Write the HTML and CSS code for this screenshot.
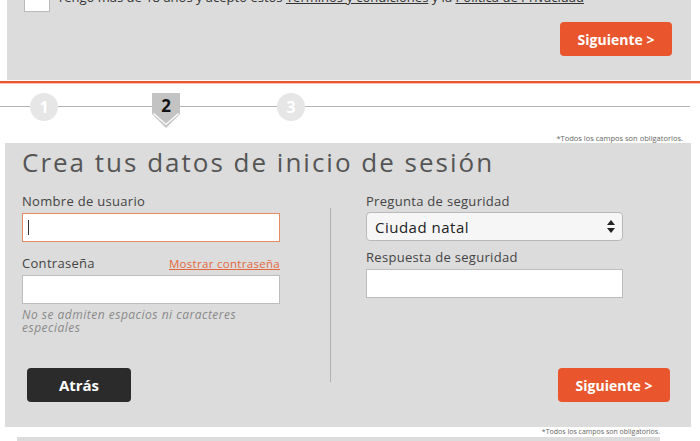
FILE: index.html
```html
<!DOCTYPE html>
<html lang="es">
<head>
    <meta charset="UTF-8">
    <title>Registro - Paso 2</title>
    <link rel="stylesheet" href="styles.css">
</head>
<body>
    <div class="terms">
        <div class="terms-row">
            <span class="checkbox"></span>
            <p class="terms-text">Tengo más de 18 años y acepto estos <a href="#">Términos y condiciones</a> y la <a href="#">Política de Privacidad</a></p>
        </div>
        <div class="actions-end">
            <button class="btn btn-primary">Siguiente &gt;</button>
        </div>
    </div>

    <div class="accent-line"></div>

    <div class="steps">
        <span class="step-line step-line-first"></span>
        <span class="step-circle">1</span>
        <span class="step-line step-line-a"></span>
        <span class="step-current">
            <svg class="step-shape" width="28" height="35" viewBox="0 0 28 35">
                <path d="M0 0 H28 V21 L14 35 L0 21 Z" fill="#c3c3c3"/>
                <path d="M1.5 20.5 L14 31.5 L26.5 20.5" fill="none" stroke="#fff" stroke-width="1.3"/>
            </svg>
            <span class="step-number">2</span>
        </span>
        <span class="step-line step-line-b"></span>
        <span class="step-circle">3</span>
        <span class="step-line step-line-last"></span>
    </div>

    <p class="required-note">*Todos los campos son obligatorios.</p>

    <div class="panel">
        <h1>Crea tus datos de inicio de sesión</h1>
        <div class="form-body">
            <div class="col col-left">
                <label class="field-label">Nombre de usuario</label>
                <div class="input input-focus"><span class="caret"></span></div>

                <div class="label-row">
                    <label class="field-label">Contraseña</label>
                    <a href="#" class="show-pass">Mostrar contraseña</a>
                </div>
                <div class="input"></div>
                <p class="hint">No se admiten espacios ni caracteres<br>especiales</p>

                <button class="btn btn-dark">Atrás</button>
            </div>

            <div class="col-divider"></div>

            <div class="col col-right">
                <label class="field-label">Pregunta de seguridad</label>
                <div class="select">
                    <span>Ciudad natal</span>
                    <svg width="8" height="13" viewBox="0 0 8 13">
                        <path d="M4 0 L8 5 H0 Z" fill="#222"/>
                        <path d="M0 8 H8 L4 13 Z" fill="#222"/>
                    </svg>
                </div>

                <label class="field-label field-label-second">Respuesta de seguridad</label>
                <div class="input input-answer"></div>

                <button class="btn btn-primary btn-end">Siguiente &gt;</button>
            </div>
        </div>
    </div>

    <div class="bottom-note">
        <p>*Todos los campos son obligatorios.</p>
    </div>
    <div class="next-panel"></div>
</body>
</html>
```

FILE: styles.css
```css
body {
    margin: 0;
    padding: 0;
    width: 700px;
    background-color: #fff;
    font-family: "Open Sans", "DejaVu Sans", sans-serif;
    color: #444;
    overflow: hidden;
}

/* top (previous step) panel, scrolled half out of view */
.terms {
    display: flow-root;
    margin: 0 9px 0 7px;
    height: 80px;
    padding: 0 19px 0 17px;
    box-sizing: border-box;
    background-color: #dcdcdc;
}

.terms-row {
    display: flex;
    align-items: flex-start;
    gap: 7px;
    margin-top: -14px;
}

.checkbox {
    width: 24px;
    height: 24px;
    background-color: #fff;
    border: 1px solid #b9b9b9;
    flex-shrink: 0;
}

.terms-text {
    margin: 3px 0 0;
    font-size: 13px;
    line-height: 17px;
    color: #333;
}

.terms-text a {
    color: #333;
}

.actions-end {
    display: flex;
    justify-content: flex-end;
    margin-top: 10px;
}

.btn {
    height: 34px;
    border: none;
    border-radius: 4px;
    font-family: "Open Sans", "DejaVu Sans", sans-serif;
    font-size: 14px;
    font-weight: 700;
    color: #fff;
    cursor: pointer;
}

.btn-primary {
    width: 112px;
    background-color: #e9562e;
}

.btn-dark {
    width: 104px;
    margin-left: 5px;
    background-color: #2b2b2b;
    font-size: 15px;
}

.accent-line {
    height: 2px;
    margin-top: 1px;
    background-color: #e9562e;
    box-shadow: 0 1px 0 #f6c3b0;
}

/* step indicator */
.steps {
    display: flex;
    align-items: flex-start;
    width: 690px;
    height: 35px;
    margin-top: 10px;
}

.step-line {
    height: 1px;
    margin-top: 13px;
    background-color: #b4b4b4;
}

.step-line-first { width: 30px; }
.step-line-a { width: 94px; }
.step-line-b { width: 97px; }
.step-line-last { flex: 1; }

.step-circle {
    width: 28px;
    height: 28px;
    border-radius: 50%;
    background-color: #e6e6e6;
    color: #fff;
    font-size: 16px;
    font-weight: 700;
    line-height: 28px;
    text-align: center;
}

.step-current {
    position: relative;
    width: 28px;
    height: 35px;
}

.step-shape {
    position: absolute;
    top: 0;
    left: 0;
}

.step-number {
    position: absolute;
    top: 1px;
    left: 0;
    width: 28px;
    text-align: center;
    font-size: 17px;
    font-weight: 700;
    line-height: 24px;
    color: #111;
}

.required-note {
    margin: 5px 0 0;
    height: 10px;
    padding-right: 17px;
    text-align: right;
    font-size: 7.5px;
    line-height: 10px;
    color: #666;
}

/* main form panel */
.panel {
    margin: 0 9px 0 5px;
    height: 284px;
    padding: 4px 21px 25px 17px;
    box-sizing: border-box;
    background-color: #dcdcdc;
    display: flex;
    flex-direction: column;
}

.panel h1 {
    margin: 0;
    font-size: 26px;
    font-weight: 400;
    line-height: 30px;
    letter-spacing: 2px;
    color: #555;
}

.form-body {
    display: flex;
    flex: 1;
    margin-top: 16px;
}

.col {
    display: flex;
    flex-direction: column;
}

.col-left {
    width: 258px;
}

.col-right {
    flex: 1;
}

.col-divider {
    width: 1px;
    margin: 15px 35px 20px 50px;
    background-color: #b0b0b0;
}

.field-label {
    display: block;
    font-size: 13px;
    line-height: 16px;
    letter-spacing: 0.3px;
    color: #444;
}

.field-label-second {
    margin-top: 8px;
}

.input {
    height: 29px;
    margin-top: 4px;
    background-color: #fff;
    border: 1px solid #bdbdbd;
    box-sizing: border-box;
    display: flex;
    align-items: center;
    padding-left: 5px;
}

.input-focus {
    border-color: #e58a63;
}

.caret {
    width: 1px;
    height: 15px;
    background-color: #333;
}

.input-answer {
    width: 257px;
}

.label-row {
    display: flex;
    justify-content: space-between;
    align-items: center;
    margin-top: 13px;
}

.show-pass {
    font-size: 11.5px;
    letter-spacing: 0.3px;
    color: #e4683b;
}

.hint {
    margin: 4px 0 0;
    font-size: 12px;
    font-style: italic;
    line-height: 13px;
    letter-spacing: 0.5px;
    color: #8a8a8a;
}

.col-left .btn-dark {
    margin-top: auto;
}

.select {
    width: 257px;
    height: 29px;
    margin-top: 3px;
    box-sizing: border-box;
    display: flex;
    justify-content: space-between;
    align-items: center;
    padding: 0 7px 0 8px;
    background-color: #f6f6f6;
    border: 1px solid #b9b9b9;
    border-radius: 4px;
    font-size: 15px;
    letter-spacing: 0.5px;
    color: #222;
}

.btn-end {
    align-self: flex-end;
    margin-top: auto;
}

/* bottom (next step) */
.bottom-note {
    height: 10px;
    padding-right: 40px;
    text-align: right;
}

.bottom-note p {
    margin: 0;
    font-size: 7px;
    line-height: 10px;
    color: #666;
}

.next-panel {
    width: 643px;
    height: 20px;
    margin-left: 17px;
    background-color: #dcdcdc;
}
```
